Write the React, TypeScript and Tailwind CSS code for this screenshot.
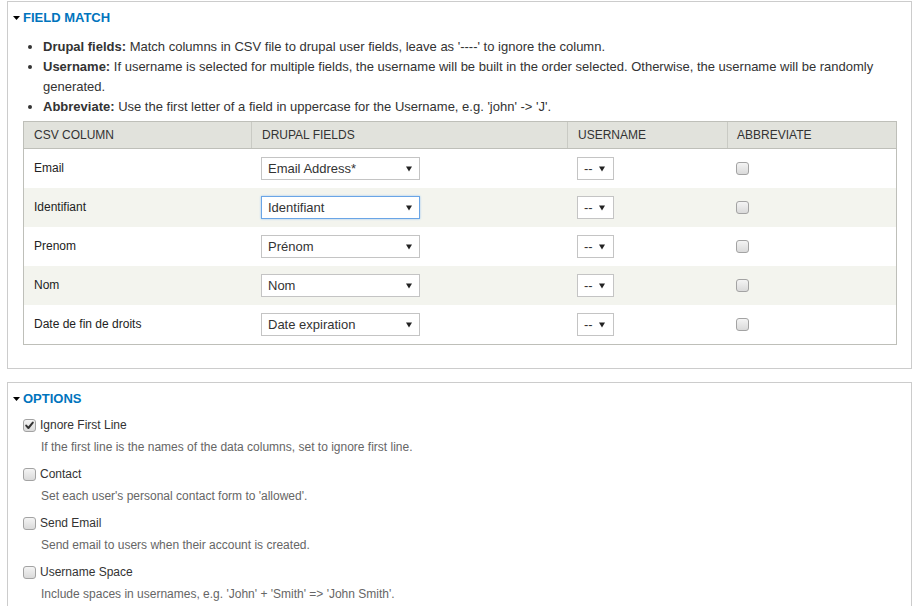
import React from "react";

const Arrow = () => (
  <svg width="6" height="6" viewBox="0 0 6 6" className="block">
    <polygon points="0,0.5 6,0.5 3,5.5" fill="#222" />
  </svg>
);

const Tri = () => (
  <svg width="7" height="4" viewBox="0 0 7 4" className="block">
    <polygon points="0,0 7,0 3.5,4" fill="#000" />
  </svg>
);

const Checkbox = ({ checked = false }: { checked?: boolean }) => (
  <span className="relative inline-block w-[13px] h-[13px] rounded-[3px] border border-[#a3a3a3] bg-gradient-to-b from-[#f4f4f4] to-[#dadada] shrink-0">
    {checked && (
      <svg width="11" height="11" viewBox="0 0 11 11" className="absolute left-[0px] top-[0px]">
        <path d="M2.2 5.6 L4.4 8 L8.8 2.6" stroke="#333" strokeWidth="2" fill="none" strokeLinecap="round" strokeLinejoin="round" />
      </svg>
    )}
  </span>
);

const Select = ({ value, focused = false, small = false }: { value: string; focused?: boolean; small?: boolean }) => (
  <div
    className={
      "flex items-center justify-between h-[23px] bg-white text-[13px] text-[#333] " +
      (small ? "w-[37px] pl-[6px] pr-[8px] " : "w-[159px] pl-[6px] pr-[7px] ") +
      (focused
        ? "border border-[#6aa5e6] shadow-[0_0_2px_#9cc8f2]"
        : "border border-[#c4c4c4]")
    }
  >
    <span className="leading-none">{value}</span>
    <Arrow />
  </div>
);

const rows = [
  { col: "Email", field: "Email Address*" },
  { col: "Identifiant", field: "Identifiant", focused: true },
  { col: "Prenom", field: "Prénom" },
  { col: "Nom", field: "Nom" },
  { col: "Date de fin de droits", field: "Date expiration" },
];

const options = [
  { label: "Ignore First Line", desc: "If the first line is the names of the data columns, set to ignore first line.", checked: true },
  { label: "Contact", desc: "Set each user's personal contact form to 'allowed'." },
  { label: "Send Email", desc: "Send email to users when their account is created." },
  { label: "Username Space", desc: "Include spaces in usernames, e.g. 'John' + 'Smith' => 'John Smith'." },
];

const Legend = ({ text }: { text: string }) => (
  <div className="flex items-center h-[20px] pl-[5px] gap-[3px]">
    <Tri />
    <span className="font-bold text-[13px] text-[#0074bd]">{text}</span>
  </div>
);

export default function App() {
  return (
    <div
      className="min-h-screen bg-white text-[#333] text-[13px] pt-[1px] px-[7px]"
      style={{ fontFamily: '"Liberation Sans", Arial, sans-serif' }}
    >
      <div className="border border-[#ccc] pt-[6px] pb-[23px]">
        <Legend text="FIELD MATCH" />
        <div className="pl-[15px] pr-[14px]">
          <ul className="list-disc pl-[20px] mt-[9px] leading-[20px] text-[13px] text-[#333]">
            <li>
              <b>Drupal fields:</b> Match columns in CSV file to drupal user fields, leave as '----' to ignore the column.
            </li>
            <li>
              <b>Username:</b> If username is selected for multiple fields, the username will be built in the order selected. Otherwise, the username will be randomly generated.
            </li>
            <li>
              <b>Abbreviate:</b> Use the first letter of a field in uppercase for the Username, e.g. 'john' -&gt; 'J'.
            </li>
          </ul>
          <div className="mt-[4px] border border-[#bebfb9] text-[12px]">
            <div className="grid grid-cols-[227px_316px_160px_1fr] h-[27px] bg-[#e1e2dc] border-b border-[#bebfb9] text-[#333]">
              <div className="flex items-center pl-[10px]">CSV COLUMN</div>
              <div className="flex items-center pl-[10px] border-l border-[#c9cac4]">DRUPAL FIELDS</div>
              <div className="flex items-center pl-[10px] border-l border-[#c9cac4]">USERNAME</div>
              <div className="flex items-center pl-[9px] border-l border-[#c9cac4]">ABBREVIATE</div>
            </div>
            {rows.map((r, i) => (
              <div
                key={r.col}
                className={
                  "grid grid-cols-[227px_316px_160px_1fr] h-[39px] " +
                  (i % 2 === 1 ? "bg-[#f3f4ee]" : "bg-white")
                }
              >
                <div className="flex items-center pl-[10px] pb-[2px] text-[#222]">{r.col}</div>
                <div className="flex items-center pl-[10px]">
                  <Select value={r.field} focused={r.focused} />
                </div>
                <div className="flex items-center pl-[10px]">
                  <Select value="--" small />
                </div>
                <div className="flex items-center pl-[9px]">
                  <Checkbox />
                </div>
              </div>
            ))}
          </div>
        </div>
      </div>

      <div className="mt-[13px] border border-[#ccc] pt-[6px] pb-[10px]">
        <Legend text="OPTIONS" />
        <div className="pl-[15px] pt-[6px]">
          {options.map((o) => (
            <div key={o.label} className="mb-[8px]">
              <div className="flex items-center h-[20px] gap-[4px] text-[12px] text-[#333]">
                <Checkbox checked={o.checked} />
                <span>{o.label}</span>
              </div>
              <div className="mt-[3px] h-[18px] leading-[18px] pl-[18px] text-[12px] text-[#666]">{o.desc}</div>
            </div>
          ))}
        </div>
      </div>
    </div>
  );
}
